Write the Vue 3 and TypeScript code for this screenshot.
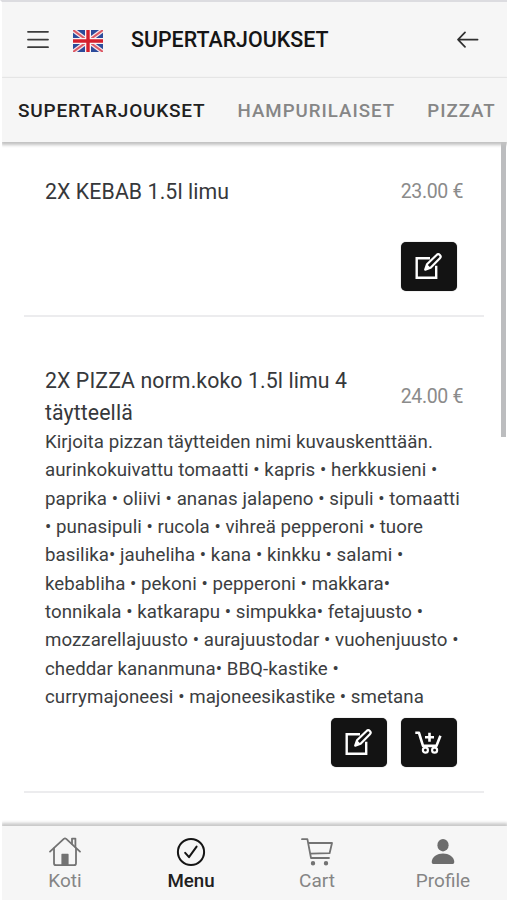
<script setup lang="ts">
interface Product {
  name: string
  price: string
  description?: string
  canAdd: boolean
}

const categories: string[] = ['SUPERTARJOUKSET', 'HAMPURILAISET', 'PIZZAT']

const products: Product[] = [
  { name: '2X KEBAB 1.5l limu', price: '23.00 €', canAdd: false },
  {
    name: '2X PIZZA norm.koko 1.5l limu 4 täytteellä',
    price: '24.00 €',
    description: [
      'Kirjoita pizzan täytteiden nimi kuvauskenttään.',
      'aurinkokuivattu tomaatti • kapris • herkkusieni •',
      'paprika • oliivi • ananas jalapeno • sipuli • tomaatti',
      '• punasipuli • rucola • vihreä pepperoni • tuore',
      'basilika• jauheliha • kana • kinkku • salami •',
      'kebabliha • pekoni • pepperoni • makkara•',
      'tonnikala • katkarapu • simpukka• fetajuusto •',
      'mozzarellajuusto • aurajuustodar • vuohenjuusto •',
      'cheddar kananmuna• BBQ-kastike •',
      'currymajoneesi • majoneesikastike • smetana',
    ].join('\n'),
    canAdd: true,
  },
]
</script>

<template>
  <div class="app">
    <header class="topbar">
      <button class="plain" aria-label="Menu">
        <svg width="22" height="20" viewBox="0 0 22 20" stroke="#3c3c3c" stroke-width="1.8" stroke-linecap="round">
          <path d="M1 1.8H21M1 9.6H21M1 17.2H21" />
        </svg>
      </button>
      <svg class="flag" width="30" height="22" viewBox="0 0 30 22">
        <rect width="30" height="22" fill="#2c4b9b" />
        <path d="M0 0L30 22M30 0L0 22" stroke="#f6e6ea" stroke-width="4.6" />
        <path d="M0 0L30 22M30 0L0 22" stroke="#dc5965" stroke-width="2" />
        <path d="M15 0V22M0 11H30" stroke="#faf3f4" stroke-width="6" />
        <path d="M15 0V22M0 11H30" stroke="#d5212e" stroke-width="3.4" />
      </svg>
      <h1>SUPERTARJOUKSET</h1>
      <button class="plain back" aria-label="Back">
        <svg width="22" height="18" viewBox="0 0 22 18" fill="none" stroke="#303030" stroke-width="1.7" stroke-linecap="round" stroke-linejoin="round">
          <path d="M20.6 8.6H1M8 1.4L1 8.6L8 15.8" />
        </svg>
      </button>
    </header>

    <nav class="tabs">
      <a v-for="(c, i) in categories" :key="c" :class="{ active: i === 0 }">{{ c }}</a>
    </nav>

    <main class="content">
      <article v-for="p in products" :key="p.name" class="item" :class="{ tall: p.description }">
        <div class="head">
          <h2>{{ p.name }}</h2>
          <span class="price">{{ p.price }}</span>
        </div>
        <p v-if="p.description">{{ p.description }}</p>
        <div class="actions">
          <button class="action" aria-label="Edit">
            <svg width="28" height="28" viewBox="0 0 28 28" fill="none" stroke="#fff" stroke-width="2.4">
              <path d="M15 5.2H1.7V24.8H21.2V12.8" />
              <path d="M10.2 16.6L12 11.3L21.6 2A2.2 2.2 0 0 1 24.9 5.2L15.6 14.8Z" stroke-width="2.2" stroke-linejoin="round" />
              <path d="M10.2 16.6L12 11.3L15.6 14.8Z" fill="#fff" stroke="none" />
            </svg>
          </button>
          <button v-if="p.canAdd" class="action" aria-label="Add to cart">
            <svg width="28" height="26" viewBox="0 0 28 26" fill="none" stroke="#fff" stroke-width="2.2" stroke-linejoin="round">
              <path d="M.3 2.8H4L8 15.9H21.4L25.4 5.8" stroke-width="2.6" />
              <path d="M14.5 2.7V11.7M10 7.2H19" stroke-width="2.6" />
              <circle cx="10.4" cy="20.2" r="2.5" />
              <circle cx="19.6" cy="20.2" r="2.5" />
            </svg>
          </button>
        </div>
      </article>
      <div class="scrollbar"></div>
    </main>

    <footer class="bottom">
      <a>
        <svg width="32" height="30" viewBox="0 0 32 30" fill="none" stroke="#737373" stroke-width="1.8" stroke-linecap="round" stroke-linejoin="round">
          <path d="M1 14.6L14.8 1.9Q16 .9 17.2 1.9L31 14.6" />
          <path d="M5 11.3V26.2Q5 28.2 7 28.2H25Q27 28.2 27 26.2V11.3M23 6.5V1.6H26.4V10" />
          <path d="M13 17.4H19V28.2H13Z" fill="#737373" stroke-width="1.2" />
        </svg>
        <span>Koti</span>
      </a>
      <a class="active">
        <svg width="30" height="30" viewBox="0 0 30 30" fill="none" stroke="#151515" stroke-width="2" stroke-linecap="round" stroke-linejoin="round">
          <circle cx="15" cy="15" r="13.1" />
          <path d="M9.2 15.8L13 20.2L20.6 9.6" />
        </svg>
        <span>Menu</span>
      </a>
      <a>
        <svg width="32" height="30" viewBox="0 0 32 30" fill="none" stroke="#737373" stroke-width="1.8" stroke-linecap="round" stroke-linejoin="round">
          <path d="M1 2.2H6.4L10 21H28M7.2 6H31L28.6 16.2L9.2 16.6" />
          <circle cx="12" cy="26.2" r="1.3" fill="#737373" />
          <circle cx="25" cy="26.2" r="1.3" fill="#737373" />
        </svg>
        <span>Cart</span>
      </a>
      <a>
        <svg width="32" height="30" viewBox="0 0 32 30" fill="#6d6d6d">
          <ellipse cx="16" cy="8.2" rx="5.6" ry="6.2" />
          <path d="M4.7 25C4.7 19.6 10.6 16.4 16 16.4S27.3 19.6 27.3 25Q27.3 27 25.7 27H6.3Q4.7 27 4.7 25Z" />
        </svg>
        <span>Profile</span>
      </a>
    </footer>
  </div>
</template>

<style>
body { background: #fff; }
</style>

<style scoped>
* { box-sizing: border-box; }
.app {
  width: 507px;
  height: 900px;
  overflow: hidden;
  display: flex;
  flex-direction: column;
  border-top: 2px solid #dcdce0;
  border-left: 2px solid #fff;
  font-family: Roboto, sans-serif;
  background: #fff;
}
button { border: 0; padding: 0; margin: 0; }
svg { display: block; flex: none; }
h1, h2, p { margin: 0; }
.plain { background: none; }
.topbar {
  height: 76px;
  flex: none;
  display: flex;
  align-items: center;
  padding: 0 28px 0 25px;
  background: #f6f6f6;
  border-bottom: 1px solid #ececec;
}
.flag { margin: 2px 28px 0 24px; }
h1 {
  font-size: 21.4px;
  line-height: 28px;
  font-weight: 500;
  color: #151515;
}
.back { margin-left: auto; }
.tabs {
  height: 64px;
  flex: none;
  display: flex;
  align-items: baseline;
  gap: 32px;
  padding: 22px 0 0 16px;
  background: #f6f6f6;
  box-shadow: 0 2px 3px 1px #c2c2c2;
  position: relative;
  z-index: 1;
  white-space: nowrap;
  font-size: 18.7px;
  line-height: 22px;
  font-weight: 500;
  letter-spacing: 1px;
  color: #868686;
}
.tabs .active { color: #202020; font-size: 19px; letter-spacing: .8px; }
.content {
  flex: 1;
  min-height: 0;
  position: relative;
  padding: 5px 21px 0 22px;
}
.item {
  width: 460px;
  height: 170px;
  border-bottom: 2px solid #ececee;
  padding: 29px 21px 0;
  display: flex;
  flex-direction: column;
}
.item.tall { height: 476px; padding-top: 48px; }
.head {
  display: flex;
  align-items: center;
  justify-content: space-between;
}
h2 {
  width: 320px;
  font-size: 21.3px;
  line-height: 32px;
  font-weight: 400;
  letter-spacing: .09px;
  color: #36383b;
}
.price {
  padding-bottom: 2px;
  font-size: 19.5px;
  letter-spacing: -.35px;
  color: #8b8b8b;
  white-space: nowrap;
}
p {
  margin-top: -1px;
  font-size: 18.7px;
  line-height: 28.35px;
  letter-spacing: .05px;
  color: #3c3e41;
  white-space: pre;
}
.actions {
  display: flex;
  justify-content: flex-end;
  gap: 14px;
  margin: auto 6px 24px 0;
}
.action {
  width: 56px;
  height: 49px;
  border-radius: 5px;
  background: #131313;
  display: flex;
  align-items: center;
  justify-content: center;
  box-shadow: 0 0 1px #777;
}
.scrollbar {
  position: absolute;
  top: 0;
  right: 1px;
  width: 5px;
  height: 295px;
  background: #bcbdbf;
}
.bottom {
  height: 74px;
  flex: none;
  display: grid;
  grid-template-columns: repeat(4, 126px);
  background: #f6f6f6;
  box-shadow: 0 -2px 3px 1px #c9c9c9;
  position: relative;
}
.bottom a {
  display: flex;
  flex-direction: column;
  align-items: center;
  padding-top: 11px;
  font-size: 19px;
  line-height: 26px;
  color: #858585;
}
.bottom .active { color: #202020; font-weight: 500; font-size: 18.7px; }
.bottom span { margin-top: 1px; }
</style>
